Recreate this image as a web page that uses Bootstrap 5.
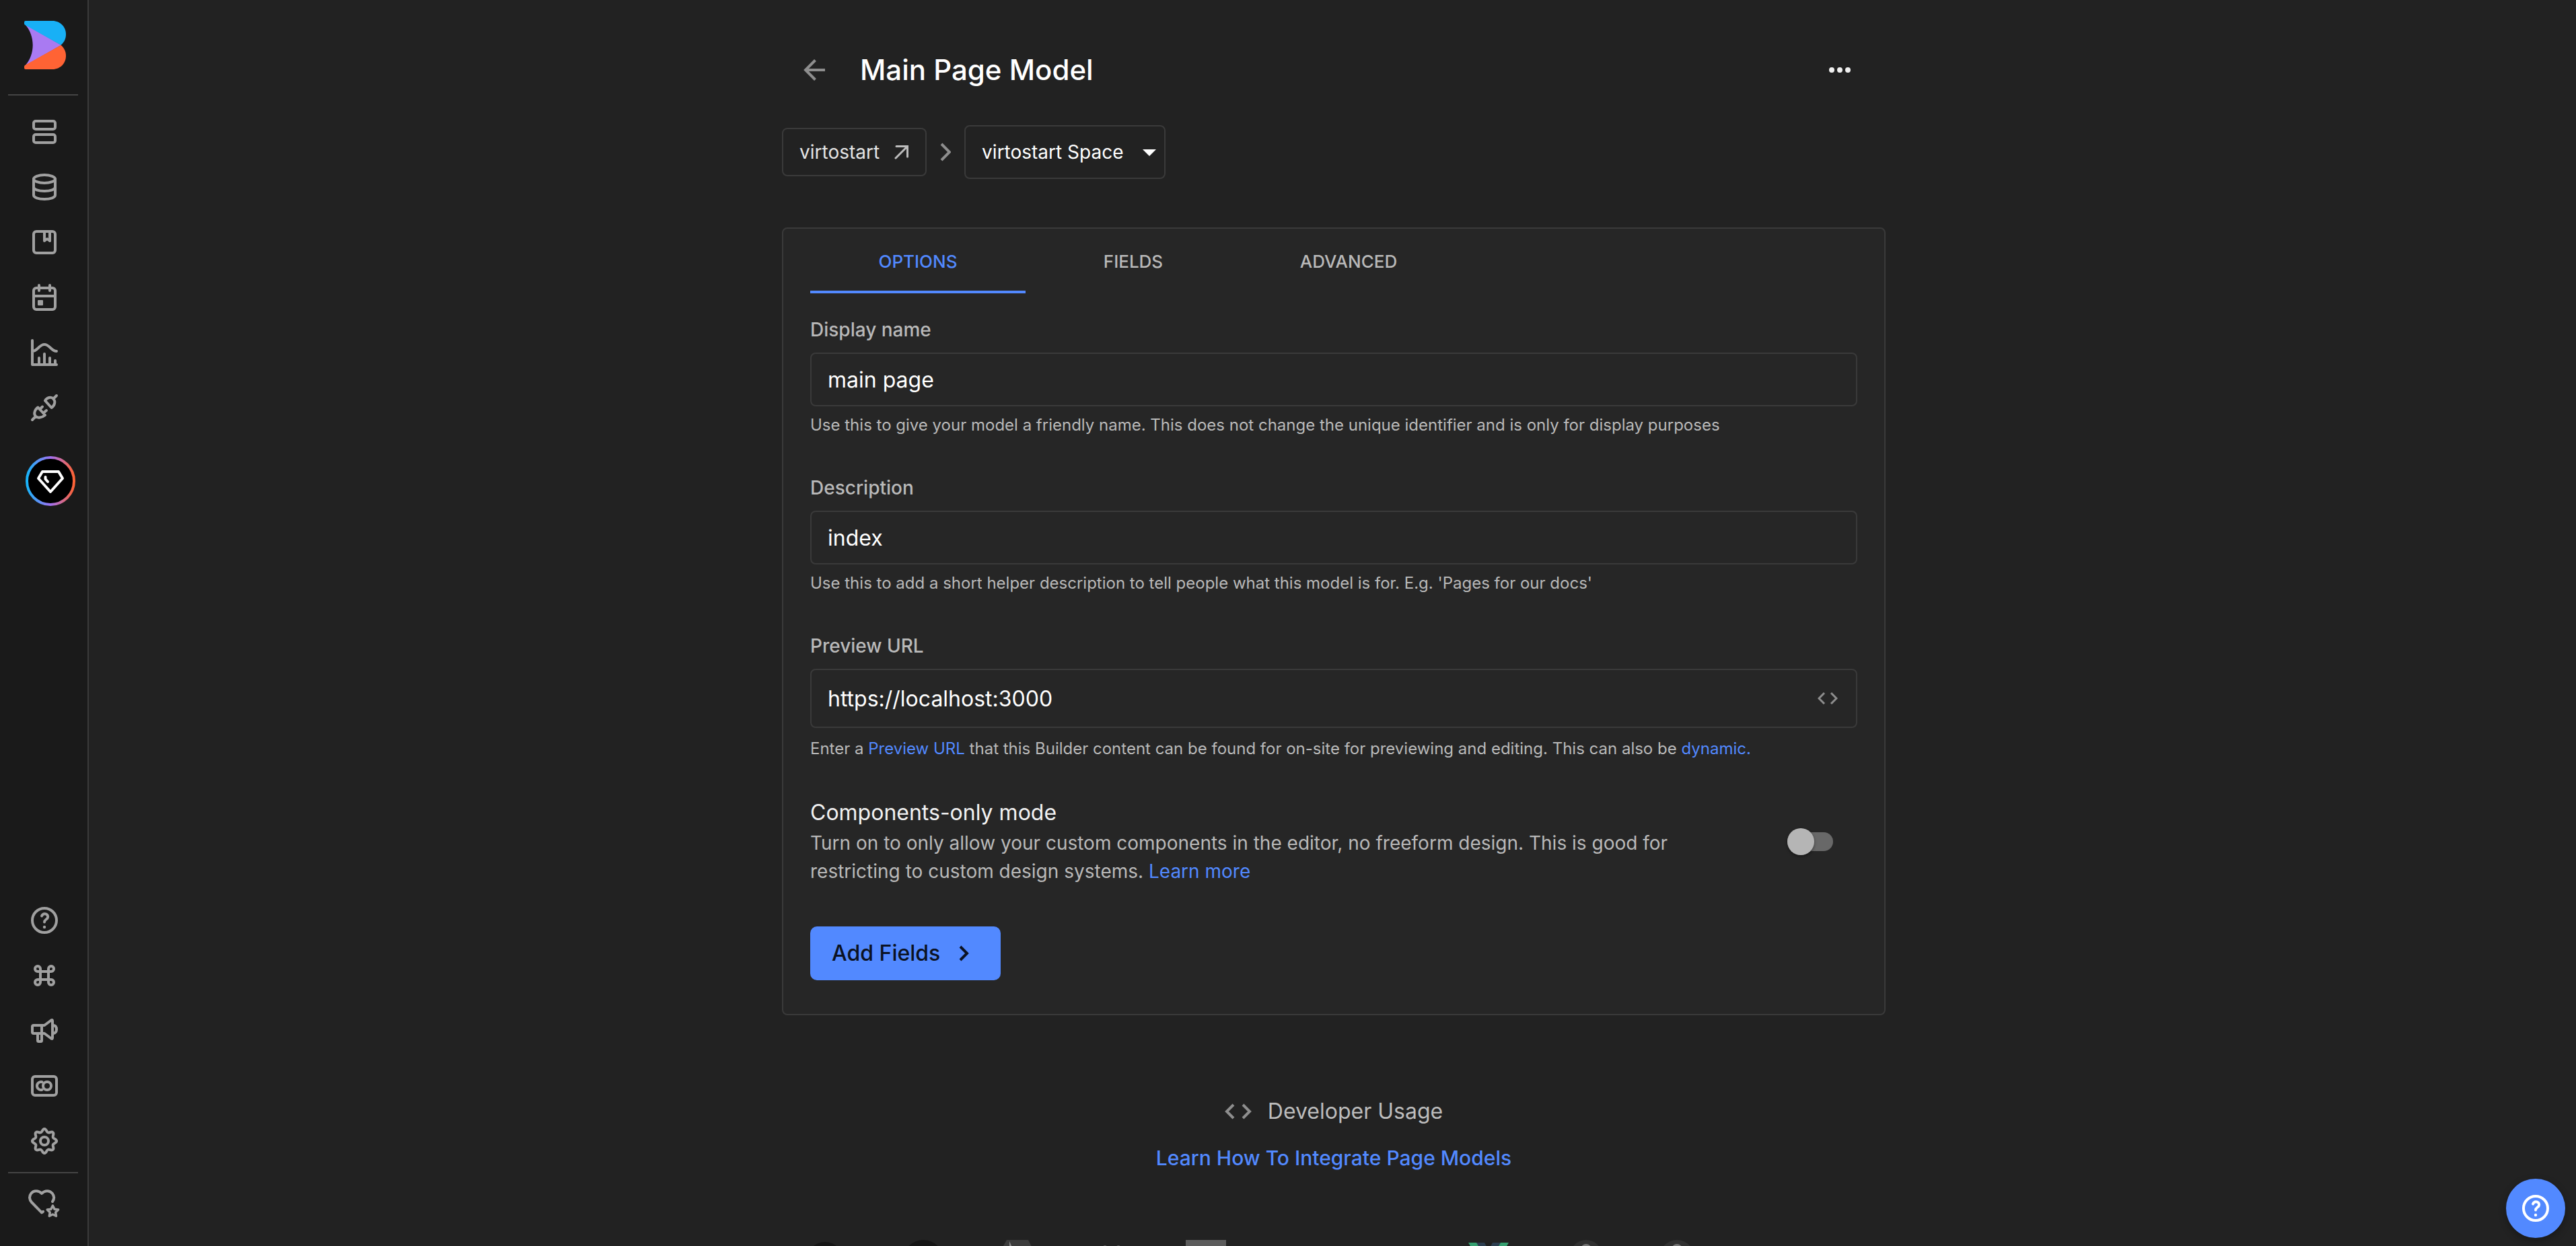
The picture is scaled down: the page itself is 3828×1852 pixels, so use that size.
<!DOCTYPE html>
<html lang="en" data-bs-theme="dark">
<head>
<meta charset="utf-8">
<meta name="viewport" content="width=device-width, initial-scale=1">
<title>Main Page Model</title>
<link rel="stylesheet" href="https://cdn.jsdelivr.net/npm/bootstrap@5.3.0/dist/css/bootstrap.min.css">
<style>
:root{--panel:#262626;--line:#3a3a3a;--accent:#5289ff;--muted:#b9b9b9;--icon:#a0a0a0}
body{font-family:Inter,"Liberation Sans",sans-serif;font-optical-sizing:none;background:#222;color:#fff;font-size:28px;line-height:42px}
a{color:var(--accent);text-decoration:none}
svg{display:block;flex:none}
.ico{width:48px;height:48px;fill:none;stroke:currentColor;stroke-width:4;stroke-linecap:round;stroke-linejoin:round}
.ico.sharp{stroke-linecap:butt;stroke-linejoin:miter}
.side{width:132px;background:#1a1a1a;border-right:2px solid var(--line);padding:31px 10px 21px 12px}
.side .nav-link{height:82px;padding:0;color:var(--icon);display:flex;align-items:center;justify-content:center}
.brand{padding-left:24px;margin-bottom:37px}
.rule{width:104px;height:2px;background:#444}
.top-nav{margin-top:13px}
.bottom-rule,.bottom-link{margin-top:5px}
.gem{margin:31px 0 0 26px;width:74px}
.page{scrollbar-width:none;padding-left:4px}
.column{max-width:1640px}
.head{margin-top:64px;padding:0 28px 0 8px;gap:28px}
.icon-btn{width:80px;height:80px;padding:0;border:0;display:flex;align-items:center;justify-content:center;color:#8e8e8e}
.title{font-size:42px;line-height:48px;font-weight:500}
.crumbs{margin-top:42px;gap:20px}
.org{height:72px;padding:0 24px;gap:22px;border:2px solid var(--line);border-radius:8px;color:#e4e4e4}
.space{height:80px;width:299px;padding:0 60px 0 24px;font-size:28px;border:2px solid var(--line);border-radius:8px;background:none;color:#fff}
.caret{right:14px;top:36px;pointer-events:none}
.panel{margin-top:72px;background:var(--panel);border:2px solid var(--line);border-radius:8px;padding:0 40px 50px}
.tabs .nav-link{width:320px;height:96px;padding:6px 0 0;border:0;border-bottom:4px solid transparent;border-radius:0;background:none;font-size:26px;font-weight:500;color:var(--muted)}
.tabs .nav-link.active{color:var(--accent);border-color:var(--accent)}
.field{margin-bottom:55px}
.field:first-of-type{margin-top:36px}
.field label{display:block;line-height:36px;margin-bottom:16px;font-weight:500;color:var(--muted)}
.field .form-control{height:80px;padding:0 24px;font-size:32px;background:none;border:2px solid var(--line);border-radius:8px;color:#fff}
.field .hint{margin-top:8px;font-size:24px;line-height:40px;color:var(--muted)}
.field.tall{margin-bottom:53px}
.field.tall .form-control{height:88px;padding-right:90px}
.field.tall .hint{margin-top:11px}
.code-btn{right:29px;top:35px;padding:0;border:0;color:#8e8e8e}
.mode-name{font-size:32px;line-height:44px;margin-bottom:2px;color:#f2f2f2}
.mode-text{max-width:1300px;color:var(--muted)}
.toggle{appearance:none;width:68px;height:40px;margin-right:36px;position:relative;display:block;flex:none}
.toggle::before{content:"";position:absolute;inset:6px 0;border-radius:14px;background:#686868}
.toggle::after{content:"";position:absolute;left:0;top:0;width:40px;height:40px;border-radius:50%;background:#b5b5b5;box-shadow:0 2px 4px rgba(0,0,0,.4)}
.add{margin-top:61px;height:80px;padding:0 46px 0 32px;gap:28px;border:0;border-radius:10px;background:var(--accent);color:#0b1222;font-size:32px;font-weight:500}
.dev{margin-top:119px;gap:24px;font-size:32px;line-height:48px;color:#bcbcbc}
.learn{margin-top:25px;font-size:30px;line-height:40px;font-weight:500}
.stacks{margin:102px 0 0 40px;gap:80px;height:60px}
.fab{right:16px;bottom:12px;width:88px;height:88px;padding:0;border:0;border-radius:50%;background:var(--accent);color:#fff;display:flex;align-items:center;justify-content:center;box-shadow:0 4px 12px rgba(0,0,0,.3)}
</style>
<script src="https://cdn.jsdelivr.net/npm/bootstrap@5.3.0/dist/js/bootstrap.bundle.min.js"></script>
</head>
<body>
<div class="d-flex vh-100">
<aside class="side d-flex flex-column flex-shrink-0">
  <a class="brand" href="#" aria-label="Home"><svg width="62" height="72" viewBox="0 0 62 72"><path fill="#a97af2" d="M1 5L55 36 1 67C9 58 12.700 47 12.700 36S9 14 1 5z"/><path fill="#18b0f6" d="M2 0H42C53.500 0 62 9 62 20c0 7-3 12-7.500 16L1 6Q0 5 0 4V2Q0 0 2 0z"/><path fill="#ff6334" d="M2 72H42C53.500 72 62 63 62 52c0-7-3-12-7.500-16L1 66Q0 67 0 68v2Q0 72 2 72z"/></svg></a>
  <div class="rule"></div>
  <nav class="top-nav nav flex-column flex-nowrap">
    <a class="nav-link" href="#" aria-label="Content"><svg class="ico" viewBox="0 0 48 48"><rect x="8" y="8" width="32" height="12" rx="3"/><rect x="8" y="28" width="32" height="12" rx="3"/></svg></a>
    <a class="nav-link" href="#" aria-label="Data"><svg class="ico" viewBox="0 0 48 48"><ellipse cx="24" cy="12" rx="16" ry="6"/><path d="M8 12v24c0 3.500 7 6 16 6s16-2.500 16-6V12M8 24c0 3.500 7 6 16 6s16-2.500 16-6"/></svg></a>
    <a class="nav-link" href="#" aria-label="Models"><svg class="ico" viewBox="0 0 48 48"><rect x="8" y="8" width="32" height="32" rx="4"/><path d="M24 9v13l4-3 4 3V9"/></svg></a>
    <a class="nav-link" href="#" aria-label="Schedule"><svg class="ico" viewBox="0 0 48 48"><rect x="8" y="10" width="32" height="32" rx="4"/><path d="M16 6v8M32 6v8M8 22h32"/><rect x="14" y="28" width="8" height="8" rx="1" fill="currentColor" stroke="none"/></svg></a>
    <a class="nav-link" href="#" aria-label="Insights"><svg class="ico" viewBox="0 0 48 48"><path d="M6 6v36h36M6 22c8 0 10-10 18-10s10 10 18 10M16 42V32M24 42V26M32 42V32M40 42v-6"/></svg></a>
    <a class="nav-link" href="#" aria-label="Integrations"><svg class="ico" viewBox="0 0 48 48"><path d="M25 13.500L34.500 24C39 21 41 15 37.500 11S27.500 9 25 13.500zM38 10l4-4M14.500 23.500L25 35C20 39 14 40 10.800 36.500S9.500 27 14.500 23.500zM6 42l5-5M17 26.500l4-4M22.500 32l4.500-4"/></svg></a>
  </nav>
  <a class="gem" href="#" aria-label="Upgrade"><svg width="74" height="74" viewBox="0 0 74 74"><defs><linearGradient id="ring"><stop offset="0" stop-color="#18b4fa"/><stop offset=".5" stop-color="#a070f0"/><stop offset="1" stop-color="#ff6334"/></linearGradient></defs><circle cx="37" cy="37" r="35" fill="#000" stroke="url(#ring)" stroke-width="4"/><path fill="none" stroke="#fff" stroke-width="4" stroke-linejoin="round" stroke-linecap="round" d="M25 23h24l6 10-18 20-18-20zM29.500 31v3l3.500 4"/></svg></a>
  <nav class="nav flex-column flex-nowrap mt-auto">
    <a class="nav-link" href="#" aria-label="Help"><svg class="ico" viewBox="0 0 48 48"><circle cx="24" cy="24" r="18"/><path d="M20 17.500c.8-2 2.300-3.300 4.500-3.300 2.800 0 4.700 2 4.700 4.500 0 3.800-5.200 3.800-5.200 7.800"/><circle cx="24" cy="34" r="2.200" fill="currentColor" stroke="none"/></svg></a>
    <a class="nav-link" href="#" aria-label="Shortcuts"><svg class="ico" viewBox="0 0 48 48"><path d="M18 14v20a4 4 0 1 1-4-4h20a4 4 0 1 1-4 4V14a4 4 0 1 1 4 4H14a4 4 0 1 1 4-4z"/></svg></a>
    <a class="nav-link" href="#" aria-label="News"><svg class="ico" viewBox="0 0 48 48"><path d="M20 16H8Q6 16 6 18v8q0 2 2 2h12zM20 16h4L34 8.500Q36 7.200 36 9.500v25q0 2.300-2 1L24 28h-4M37.500 16c3 .5 4.500 3 4.500 6s-1.500 5.500-4.500 6M14 28v10.500Q14 40 15.500 40h3q1.500 0 1.500-1.500V28"/></svg></a>
    <a class="nav-link" href="#" aria-label="Account"><svg class="ico" viewBox="0 0 48 48"><rect x="6" y="10" width="36" height="28" rx="4"/><circle cx="28" cy="24" r="6"/><path d="M20.500 18.200a6 6 0 1 0 0 11.600"/></svg></a>
    <a class="nav-link" href="#" aria-label="Settings"><svg class="ico" viewBox="0 0 48 48"><defs><path id="petal" d="M24 6C27 6 27 10.300 29.300 11.250 31.600 12.200 34.600 9.100 36.700 11.300 38.900 13.400 35.800 16.400 36.750 18.700 37.700 21 42 21 42 24"/></defs><use href="#petal"/><use href="#petal" transform="rotate(90 24 24)"/><use href="#petal" transform="rotate(180 24 24)"/><use href="#petal" transform="rotate(270 24 24)"/><circle cx="24" cy="24" r="6"/></svg></a>
  </nav>
  <div class="rule bottom-rule"></div>
  <nav class="nav flex-column bottom-link"><a class="nav-link" href="#" aria-label="Favorites"><svg class="ico" viewBox="0 0 48 48"><path d="M36 20c2.500-3.500 3-8-.3-12.200C31.500 2.800 24.500 3 20 8 15.500 3 8 2.800 4.300 7.800 1 12 1.500 17.500 5 21l15 15.300 2-1.500"/><path stroke-width="3.500" d="M36.400 26l2.600 5.200 5.600.8-4 4 .9 5.500-5.100-2.500-5.100 2.500.9-5.500-4-4 5.600-.8z"/></svg></a></nav>
</aside>

<main class="page flex-grow-1 overflow-auto">
<div class="column mx-auto">
  <header class="head d-flex align-items-center">
    <button class="btn icon-btn" aria-label="Back"><svg class="ico sharp" viewBox="0 0 48 48"><path d="M40 24H12M25.500 9.500L11 24l14.500 14.500"/></svg></button>
    <h1 class="title mb-0">Main Page Model</h1>
    <button class="btn icon-btn ms-auto" aria-label="More"><svg width="32" height="8" viewBox="0 0 32 8" fill="#f0f0f0"><circle cx="4" cy="4" r="4"/><circle cx="16" cy="4" r="4"/><circle cx="28" cy="4" r="4"/></svg></button>
  </header>
  <div class="crumbs d-flex align-items-center">
    <a class="org d-flex align-items-center" href="#"><span>virtostart</span><svg width="22" height="22" viewBox="0 0 22 22" fill="none" stroke="#bdbdbd" stroke-width="3" stroke-linecap="round"><path d="M3 2.500h16.500V18M19.500 2.500L2 20"/></svg></a>
    <svg width="16" height="28" viewBox="0 0 16 28" fill="none" stroke="#8e8e8e" stroke-width="4"><path d="M2 2l12 12L2 26"/></svg>
    <div class="position-relative">
      <select class="space" aria-label="Space" style="appearance:none"><option>virtostart Space</option></select>
      <svg class="caret position-absolute" width="20" height="10" viewBox="0 0 20 10"><path fill="#fff" d="M0 0h20L10 10z"/></svg>
    </div>
  </div>

  <section class="panel">
    <div class="tabs nav" role="tablist">
      <button class="nav-link active" role="tab" aria-selected="true">OPTIONS</button>
      <button class="nav-link" role="tab">FIELDS</button>
      <button class="nav-link" role="tab">ADVANCED</button>
    </div>
    <form>
      <div class="field">
        <label for="name">Display name</label>
        <input id="name" class="form-control" type="text" value="main page">
        <div class="hint">Use this to give your model a friendly name. This does not change the unique identifier and is only for display purposes</div>
      </div>
      <div class="field">
        <label for="desc">Description</label>
        <input id="desc" class="form-control" type="text" value="index">
        <div class="hint">Use this to add a short helper description to tell people what this model is for. E.g. 'Pages for our docs'</div>
      </div>
      <div class="field tall">
        <label for="url">Preview URL</label>
        <div class="position-relative">
          <input id="url" class="form-control" type="text" value="https://localhost:3000">
          <button type="button" class="btn code-btn position-absolute" aria-label="Edit code"><svg width="30" height="18" viewBox="0 0 30 18" fill="none" stroke="currentColor" stroke-width="3"><path d="M10 1L2 9l8 8M20 1l8 8-8 8"/></svg></button>
        </div>
        <div class="hint">Enter a <a href="#">Preview URL</a> that this Builder content can be found for on-site for previewing and editing. This can also be <a href="#">dynamic.</a></div>
      </div>
      <div class="d-flex align-items-center justify-content-between">
        <div>
          <label class="mode-name d-block" for="mode">Components-only mode</label>
          <div class="mode-text">Turn on to only allow your custom components in the editor, no freeform design. This is good for restricting to custom design systems. <a href="#">Learn more</a></div>
        </div>
        <input id="mode" class="toggle" type="checkbox" role="switch">
      </div>
      <button type="button" class="add btn d-flex align-items-center">Add Fields <svg width="16" height="24" viewBox="0 0 16 24" fill="none" stroke="currentColor" stroke-width="4"><path d="M2 2l10 10L2 22"/></svg></button>
    </form>
  </section>

  <div class="dev d-flex align-items-center justify-content-center"><svg width="40" height="24" viewBox="0 0 40 24" fill="none" stroke="#8e8e8e" stroke-width="4"><path d="M13 2L3 12l10 10M27 2l10 10-10 10"/></svg><span>Developer Usage</span></div>
  <div class="learn text-center"><a href="#">Learn How To Integrate Page Models</a></div>
  <div class="stacks d-flex">
    <svg width="60" height="60"><circle cx="24" cy="30" r="27" fill="#151515"/></svg>
    <svg width="60" height="60"><circle cx="30" cy="30" r="30" fill="#151515"/></svg>
    <svg width="60" height="60"><path fill="#3c3c3c" d="M14 0h32l8 16v44H6V14z"/><path fill="#888" d="M18 2l12 26H18z"/></svg>
    <svg width="60" height="60"><g fill="#5c5c5c"><circle cx="20" cy="11" r="3"/><circle cx="40" cy="11" r="3"/></g></svg>
    <svg width="60" height="60"><path fill="#5c5c5c" d="M0 0h60v60H0z"/></svg>
    <svg width="60" height="60"></svg>
    <svg width="60" height="60"></svg>
    <svg width="60" height="60"><path fill="#35a070" d="M0 4h60L30 56z"/><path fill="#2c3e50" d="M12 4h36L30 35z"/><path fill="#202020" d="M24 4h12l-6 11z"/></svg>
    <svg width="60" height="60"><circle cx="35" cy="24" r="24" fill="#303030"/><circle cx="35" cy="14" r="8" fill="#777"/></svg>
    <svg width="60" height="60"><circle cx="30" cy="26" r="26" fill="#303030"/><circle cx="30" cy="14" r="8" fill="#777"/></svg>
  </div>
</div>
</main>
</div>
<button class="btn fab position-fixed" aria-label="Get help"><svg class="ico" viewBox="0 0 48 48"><circle cx="24" cy="24" r="18"/><path d="M20 17.500c.8-2 2.300-3.300 4.500-3.300 2.800 0 4.700 2 4.700 4.500 0 3.800-5.200 3.800-5.200 7.800"/><circle cx="24" cy="34" r="2.200" fill="currentColor" stroke="none"/></svg></button>
</body>
</html>
